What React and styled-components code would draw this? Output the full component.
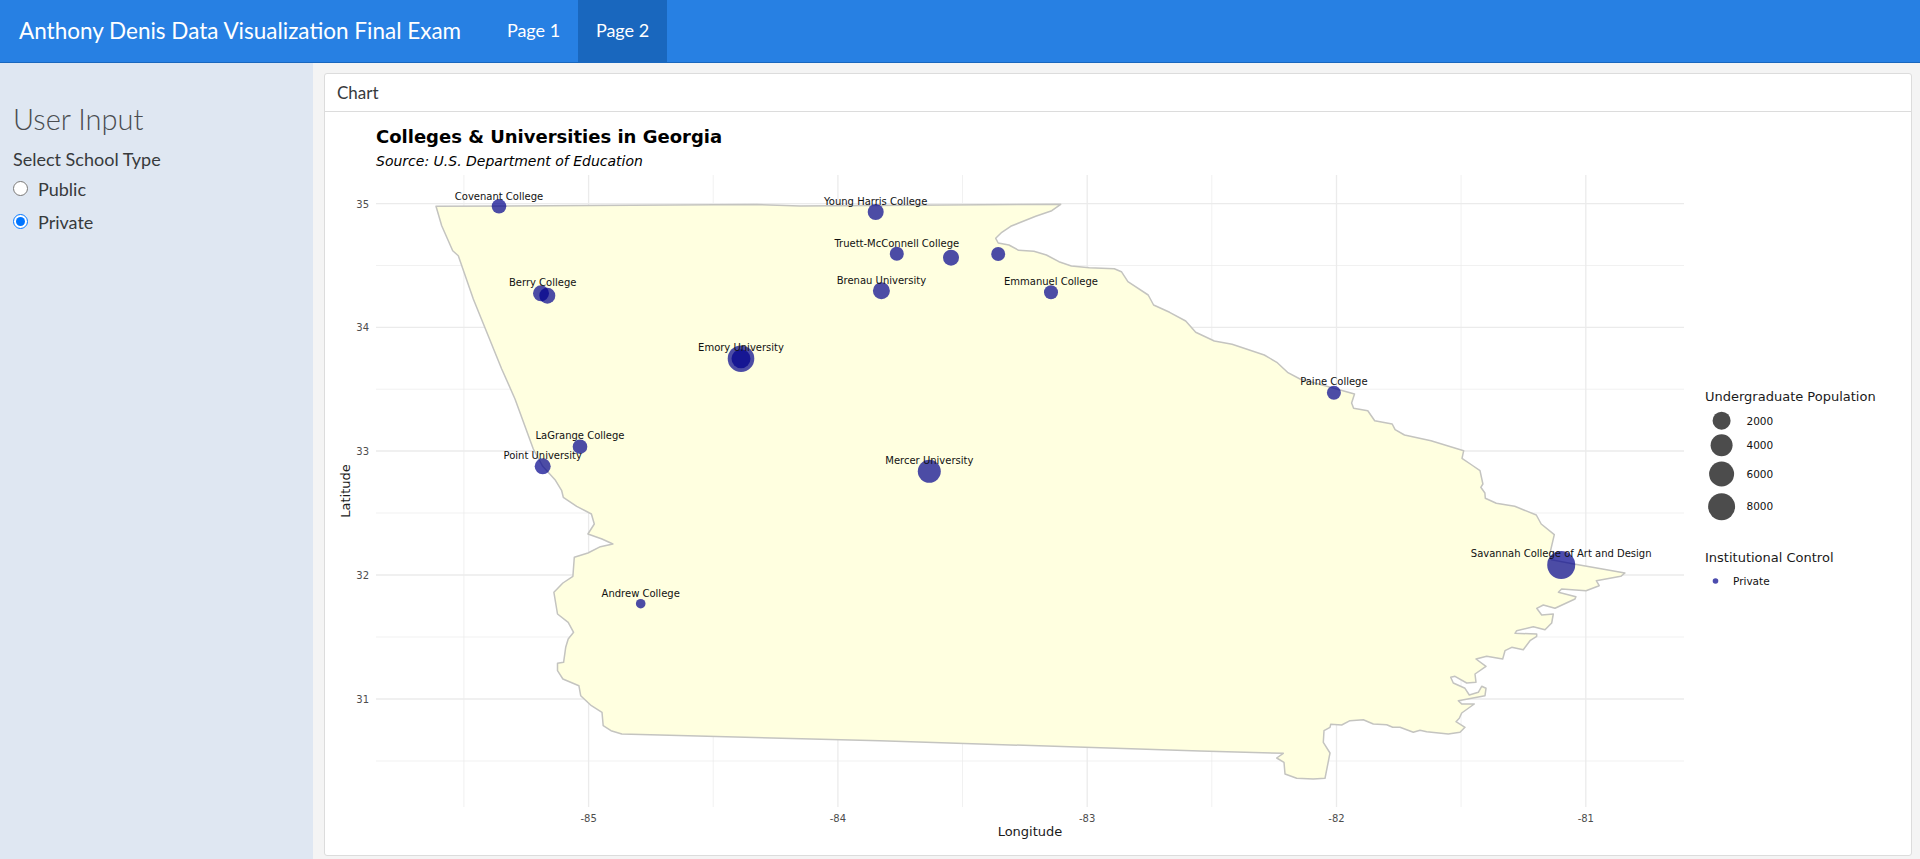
import React from "react"
import styled, { createGlobalStyle } from "styled-components"

const GlobalStyle = createGlobalStyle`
  html, body {
    margin: 0;
    padding: 0;
    height: 100%;
    overflow: hidden;
  }
  body {
    font-family: "Lato", "Open Sans", sans-serif;
    color: #373a3c;
  }
`

const Page = styled.div`
  width: 100vw;
  height: 100vh;
  display: flex;
  flex-direction: column;
  background-color: #f4f4f4;
`

const Navbar = styled.nav`
  height: 62px;
  flex: none;
  display: flex;
  align-items: stretch;
  background-color: #2780e3;
  border-bottom: 1px solid #1967be;
  color: #fff;
`

const Brand = styled.div`
  padding-left: 19px;
  width: 470px;
  font-size: 22.5px;
  line-height: 61px;
  white-space: nowrap;
`

const NavLink = styled.a`
  width: 89px;
  text-align: center;
  font-size: 18px;
  line-height: 61px;
  color: #fff;
  background-color: ${(p) => (p.$active ? "#1967be" : "transparent")};
`

const Content = styled.div`
  flex: 1;
  min-height: 0;
  display: flex;
`

const Sidebar = styled.aside`
  width: 313px;
  flex: none;
  box-sizing: border-box;
  padding: 38px 13px 0;
  background-color: #dfe7f2;
`

const SidebarTitle = styled.h3`
  margin: 0;
  font-size: 29px;
  line-height: 36px;
  font-weight: 300;
  color: #4a4d50;
`

const FieldLabel = styled.div`
  margin-top: 9px;
  font-size: 18px;
  line-height: 26px;
`

const RadioRow = styled.label`
  display: flex;
  align-items: center;
  gap: 10px;
  height: 33px;
  font-size: 18px;
`

const RadioInput = styled.input`
  width: 15px;
  height: 15px;
  margin: 0;
`

const Main = styled.main`
  flex: 1;
  min-width: 0;
  padding: 10px 8px 3px 11px;
  display: flex;
`

const Card = styled.section`
  flex: 1;
  display: flex;
  flex-direction: column;
  background-color: #fff;
  border: 1px solid #dcdcdc;
  border-radius: 3px;
`

const CardHeader = styled.div`
  height: 38px;
  flex: none;
  box-sizing: border-box;
  padding-left: 12px;
  font-size: 17px;
  line-height: 38px;
  border-bottom: 1px solid #dcdcdc;
`

const ChartSvg = styled.svg`
  display: block;
  flex: 1;
  min-height: 0;
  width: 100%;
  font-family: "DejaVu Sans", sans-serif;
`

const ChartTitle = styled.text`
  font-size: 18px;
  font-weight: 700;
  fill: #000;
`

const ChartSubtitle = styled.text`
  font-size: 14px;
  font-style: italic;
  fill: #000;
`

const AxisTick = styled.text`
  font-size: 10px;
  fill: #4d4d4d;
  text-anchor: ${(p) => p.$anchor};
`

const AxisTitle = styled.text`
  font-size: 13px;
  fill: #1a1a1a;
  text-anchor: middle;
`

const SchoolLabel = styled.text`
  font-size: 10px;
  fill: #111;
  text-anchor: middle;
`

const LegendTitle = styled.text`
  font-size: 13px;
  fill: #1a1a1a;
`

const LegendText = styled.text`
  font-size: 10.5px;
  fill: #111;
`

const GridLine = styled.line`
  stroke: #ebebeb;
  stroke-width: ${(p) => (p.$major ? 1.3 : 0.7)};
`

// outline traced off the reference, in page pixels
const georgia = `M436 207.3 L756.7 205.5 L800 207 L1060.7 205.3 L1051.8 211.7 L1035.7 217.3 L1010.7 227.3 L1001.8 233.3 L995.7 239.3
L998.2 244 L1008.9 246 L1018.6 251.3 L1033.9 252.3 L1046.4 256 L1058.9 262.7 L1071.4 267 L1089.3 268.7 L1114.3 269.7 L1121.4 272.7
L1127.9 282.7 L1148.2 296 L1153.6 306 L1169.6 313.3 L1185.7 322 L1195.7 333.3 L1214.3 342 L1232.1 345.3 L1264.3 356 L1276.8 363.3
L1287.5 373.3 L1300 380 L1325 386.7 L1354.5 395 L1351.6 404 L1353.6 409.3 L1367.8 411.7 L1374.7 421.7 L1392.2 425 L1395.1 430.7
L1404.5 436 L1431 441.7 L1463.7 451.7 L1462 459.3 L1471.8 466 L1480 471.7 L1482.9 485 L1480.8 488.3 L1484.9 494 L1485.3 499.3
L1496.3 504.3 L1514.7 507.3 L1536.3 516 L1541.2 525 L1554.3 535.7 L1549.4 556.7 L1551.4 560.7 L1573.9 565 L1602.4 570 L1624.9 574
L1620.8 577.3 L1596.3 581.7 L1599.2 586.7 L1586 591.7 L1561.6 590 L1558.4 593.3 L1575.9 597.7 L1575 600 L1555 609.3 L1543.3 606
L1536.7 609.3 L1541.7 616 L1553.3 615 L1551.7 624 L1545 630.7 L1533.3 627.7 L1516.7 631.7 L1515 634.3 L1536.7 635 L1536.7 637.3
L1530 641.7 L1523.3 650.7 L1511.7 648.3 L1505 651.7 L1502.7 660 L1486.7 657.3 L1476 660 L1486 667.3 L1475 675 L1476 683.3
L1466.7 684 L1455 677.3 L1450.7 678.3 L1453.3 684 L1465 689.3 L1469.3 696 L1478.3 693.3 L1481.7 687.3 L1486 689.3 L1485 696.7
L1458.3 701.7 L1461.7 705 L1474.3 705 L1461.7 714 L1459.3 719.3 L1456 722.7 L1465 728.3 L1460 733.3 L1448.3 735 L1426.7 732.7
L1420 731.3 L1413.3 733.3 L1400 728.3 L1392.7 728.3 L1386.7 725.7 L1373.3 725 L1363.3 720.7 L1350 721.7 L1341.7 726 L1330.7 725.3
L1330 728.3 L1324 731.7 L1323.3 743.3 L1330 754 L1325 779.3 L1313.3 780 L1296.7 779.3 L1285 775 L1284 763.3 L1276.7 759 L1283.3 754.3
L1200 752 L880 741.7 L621.8 735 L611 731.7 L603.2 726.7 L602 713.3 L591.4 706.7 L580.7 696.7 L578.9 686.7 L562.9 680 L557.5 671.7
L557.5 664.3 L563.6 663.3 L565.7 648.3 L568.2 640 L573.6 633.3 L568.2 623.3 L557.5 615 L553.9 593.3 L562.9 584 L572.9 577.3
L574.3 558.3 L587.9 554 L600.4 547.7 L612.9 545 L602 540 L587.9 535 L594.3 525 L591.4 515 L576.7 507.3 L563.3 498.3 L561.7 491.7
L555 480.7 L542.7 467.3 L533.3 450 L515 400 L501.7 370 L473.3 300 L458.3 256.7 L452.7 251.7 L441.7 226.7 Z`

const schools = [
  { x: 499, y: 207.3, r: 7.3 },
  { x: 541, y: 294.3, r: 8 },
  { x: 547.3, y: 296.7, r: 8 },
  { x: 741, y: 359.7, r: 13.3 },
  { x: 741, y: 359.7, r: 9.5 },
  { x: 580, y: 447.7, r: 7.3 },
  { x: 542.7, y: 467.3, r: 8 },
  { x: 875.7, y: 213, r: 8 },
  { x: 896.8, y: 254.7, r: 7 },
  { x: 951, y: 258.7, r: 8 },
  { x: 998.2, y: 255, r: 7 },
  { x: 881.4, y: 291.7, r: 8.5 },
  { x: 1051, y: 293.3, r: 7 },
  { x: 929.3, y: 472.3, r: 11.5 },
  { x: 1333.9, y: 393.7, r: 7 },
  { x: 1561.2, y: 566, r: 14 },
  { x: 640.7, y: 604.7, r: 4.8 },
]

const labels = [
  { name: "Covenant College", x: 499, y: 200.7 },
  { name: "Berry College", x: 542.7, y: 287 },
  { name: "Emory University", x: 741, y: 352.3 },
  { name: "LaGrange College", x: 580, y: 440.3 },
  { name: "Point University", x: 542.7, y: 460.3 },
  { name: "Young Harris College", x: 875.7, y: 206 },
  { name: "Truett-McConnell College", x: 896.8, y: 248 },
  { name: "Brenau University", x: 881.4, y: 285 },
  { name: "Emmanuel College", x: 1051, y: 286 },
  { name: "Mercer University", x: 929.3, y: 465.3 },
  { name: "Paine College", x: 1333.9, y: 386 },
  { name: "Savannah College of Art and Design", x: 1561.2, y: 558.3 },
  { name: "Andrew College", x: 640.7, y: 597.7 },
]

const yMajor = [
  { label: "35", y: 204.7 },
  { label: "34", y: 328.4 },
  { label: "33", y: 452 },
  { label: "32", y: 576 },
  { label: "31", y: 700 },
]
const yMinor = [266.5, 390.2, 514, 638, 762]
const xMajor = [
  { label: "-85", x: 588.6 },
  { label: "-84", x: 837.9 },
  { label: "-83", x: 1087.2 },
  { label: "-82", x: 1336.5 },
  { label: "-81", x: 1585.8 },
]
const xMinor = [463.9, 713.2, 962.5, 1211.8, 1461.1]

const sizeLegend = [
  { label: "2000", y: 421.7, r: 9, text: 426 },
  { label: "4000", y: 446.3, r: 11, text: 450.3 },
  { label: "6000", y: 475, r: 12.5, text: 479.3 },
  { label: "8000", y: 507.7, r: 13.5, text: 511.3 },
]

const GeorgiaChart = () => (
  <ChartSvg viewBox="325 113 1586 743" preserveAspectRatio="xMinYMin meet">
    <ChartTitle x="376" y="144">Colleges &amp; Universities in Georgia</ChartTitle>
    <ChartSubtitle x="376" y="167">Source: U.S. Department of Education</ChartSubtitle>

    {yMinor.map((y) => <GridLine key={y} x1="376" x2="1684" y1={y} y2={y} />)}
    {xMinor.map((x) => <GridLine key={x} x1={x} x2={x} y1="176" y2="808" />)}
    {yMajor.map((t) => <GridLine key={t.y} $major x1="376" x2="1684" y1={t.y} y2={t.y} />)}
    {xMajor.map((t) => <GridLine key={t.x} $major x1={t.x} x2={t.x} y1="176" y2="808" />)}

    <path d={georgia} fill="#ffffe0" stroke="#c4c4c0" strokeWidth="1.5" strokeLinejoin="round" />

    {schools.map((s, i) => (
      <circle key={i} cx={s.x} cy={s.y} r={s.r} fill="#00008b" fillOpacity="0.7" />
    ))}
    {labels.map((l) => <SchoolLabel key={l.name} x={l.x} y={l.y}>{l.name}</SchoolLabel>)}

    {yMajor.map((t) => <AxisTick key={t.label} $anchor="end" x="369" y={t.y + 4}>{t.label}</AxisTick>)}
    {xMajor.map((t) => <AxisTick key={t.label} $anchor="middle" x={t.x} y="823">{t.label}</AxisTick>)}
    <AxisTitle x="1030" y="837">Longitude</AxisTitle>
    <AxisTitle transform="translate(350 492) rotate(-90)">Latitude</AxisTitle>

    <LegendTitle x="1705" y="402">Undergraduate Population</LegendTitle>
    {sizeLegend.map((s) => (
      <g key={s.label}>
        <circle cx="1721.6" cy={s.y} r={s.r} fill="#000" fillOpacity="0.7" />
        <LegendText x="1746.5" y={s.text}>{s.label}</LegendText>
      </g>
    ))}
    <LegendTitle x="1705" y="562.7">Institutional Control</LegendTitle>
    <circle cx="1715.5" cy="582" r="2.8" fill="#00008b" fillOpacity="0.7" />
    <LegendText x="1733" y="585.7">Private</LegendText>
  </ChartSvg>
)

export default function App() {
  return (
    <Page>
      <GlobalStyle />
      <Navbar>
        <Brand>Anthony Denis Data Visualization Final Exam</Brand>
        <NavLink>Page 1</NavLink>
        <NavLink $active>Page 2</NavLink>
      </Navbar>
      <Content>
        <Sidebar>
          <SidebarTitle>User Input</SidebarTitle>
          <FieldLabel>Select School Type</FieldLabel>
          <RadioRow>
            <RadioInput type="radio" name="type" value="public" />
            Public
          </RadioRow>
          <RadioRow>
            <RadioInput type="radio" name="type" value="private" defaultChecked />
            Private
          </RadioRow>
        </Sidebar>
        <Main>
          <Card>
            <CardHeader>Chart</CardHeader>
            <GeorgiaChart />
          </Card>
        </Main>
      </Content>
    </Page>
  )
}
